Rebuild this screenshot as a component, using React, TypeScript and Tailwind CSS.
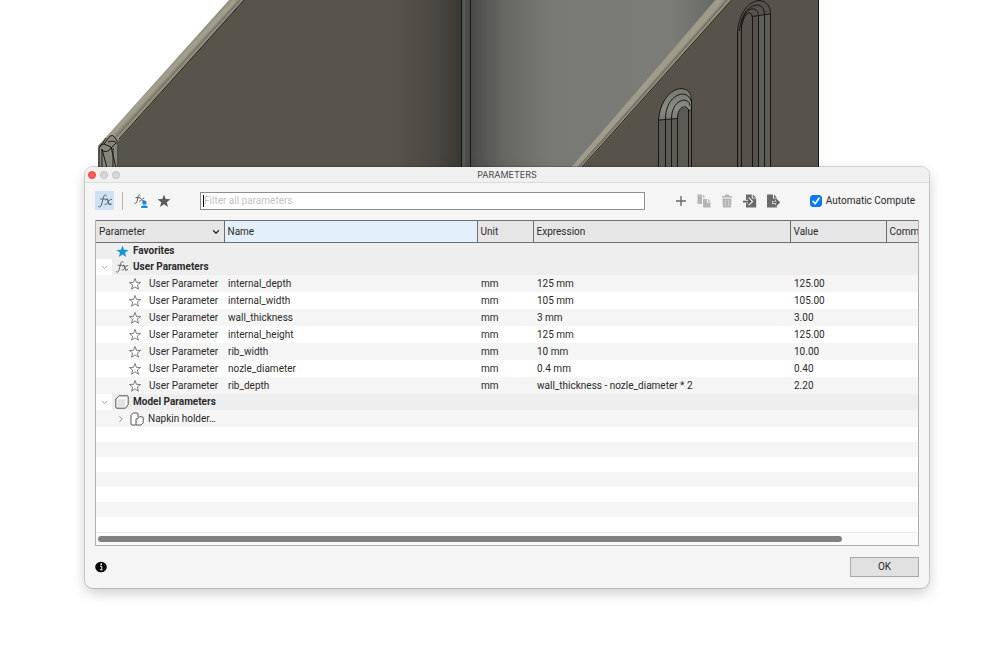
import React, { useState } from 'react'
import { ChevronDown, ChevronRight } from 'lucide-react'

const userParameters = [
  { name: 'internal_depth', unit: 'mm', expression: '125 mm', value: '125.00' },
  { name: 'internal_width', unit: 'mm', expression: '105 mm', value: '105.00' },
  { name: 'wall_thickness', unit: 'mm', expression: '3 mm', value: '3.00' },
  { name: 'internal_height', unit: 'mm', expression: '125 mm', value: '125.00' },
  { name: 'rib_width', unit: 'mm', expression: '10 mm', value: '10.00' },
  { name: 'nozle_diameter', unit: 'mm', expression: '0.4 mm', value: '0.40' },
  { name: 'rib_depth', unit: 'mm', expression: 'wall_thickness - nozle_diameter * 2', value: '2.20' },
]

const emptyRows = [0, 1, 2, 3, 4, 5, 6]

const STAR = 'M8 .6 L9.9 5.8 L15.4 6 L11.1 9.4 L12.6 14.9 L8 11.8 L3.4 14.9 L4.9 9.4 L.6 6 L6.1 5.8 Z'

function Star({ className }: { className: string }) {
  return (
    <svg viewBox="0 0 16 16" className={className} aria-hidden="true">
      <path d={STAR} strokeLinejoin="round" />
    </svg>
  )
}

function Fx({ className }: { className: string }) {
  return (
    <svg viewBox="0 0 16 16" className={className} fill="none" stroke="currentColor" strokeLinecap="round" aria-hidden="true">
      <path d="M9.4 2.6 C8.6 1.4 7.2 1.8 6.6 3.8 L4.4 12 C4 13.6 2.8 14.4 1.6 13.6" />
      <path d="M3.6 6 H8" />
      <path d="M8.8 6.7 C10.4 5.4 10.8 6.8 11.2 8.4 C11.6 10.4 12 12.4 14.2 11" strokeWidth="1.3" />
      <path d="M14.6 6.4 C13 5.8 12.2 7.6 11.2 9 C10.2 10.6 9.4 12 8 11.4" />
    </svg>
  )
}

// shaded CAD body behind the dialog
function ModelView() {
  return (
    <svg className="absolute left-0 top-0" width="1000" height="180" viewBox="0 0 1000 180" fill="none" aria-hidden="true">
      <defs>
        <linearGradient id="side" x1="118" x2="462" y1="0" y2="0" gradientUnits="userSpaceOnUse">
          <stop offset="0" stopColor="#57544c" />
          <stop offset="0.8" stopColor="#58544b" />
          <stop offset="0.92" stopColor="#4b4942" />
          <stop offset="1" stopColor="#383732" />
        </linearGradient>
        <linearGradient id="back" x1="471" x2="740" y1="0" y2="0" gradientUnits="userSpaceOnUse">
          <stop offset="0" stopColor="#4a4b49" />
          <stop offset="0.12" stopColor="#666762" />
          <stop offset="0.3" stopColor="#797a75" />
          <stop offset="0.75" stopColor="#7b7c77" />
          <stop offset="0.87" stopColor="#6d6e6b" />
          <stop offset="1" stopColor="#555654" />
        </linearGradient>
        <linearGradient id="slot" x1="0" x2="0" y1="88" y2="122" gradientUnits="userSpaceOnUse">
          <stop offset="0" stopColor="#74756f" />
          <stop offset="0.6" stopColor="#8b8c84" />
          <stop offset="1" stopColor="#74756f" />
        </linearGradient>
      </defs>

      <path d="M244 0 H462 V180 H118 V139 Z" fill="url(#side)" />
      <path d="M229 0 H244 L119 140 L108 150 L98 146 Z" fill="#95917f" />
      <path d="M235 0 L108 138" stroke="#a19e8d" strokeWidth="4" />
      <path d="M240 0 L114 139" stroke="#7c796d" strokeWidth="2" />
      <path d="M244 0 L119 139" stroke="#1c1b18" />

      <path d="M471 0 H716 L572 168 V180 H471 Z" fill="url(#back)" />
      <path d="M461 0 H471 V180 H461 Z" fill="#4a4b48" />
      <path d="M464 0 V180" stroke="#585955" strokeWidth="3" />
      <path d="M461.5 0 V180 M470.5 0 V180" stroke="#171715" />

      <path d="M731 0 H819 V180 H570 Z" fill="#57534b" />
      <path d="M715 0 H732 L582 168 H571 Z" fill="#96927f" />
      <path d="M720 0 L574 168" stroke="#a09c8b" strokeWidth="5" />
      <path d="M727 0 L578 168" stroke="#78756a" strokeWidth="2" />
      <path d="M731.5 0 L582 167" stroke="#1c1b18" />
      <path d="M818.5 0 V180" stroke="#171715" />

      <path d="M98 148 Q98 143 103 143 L112 135 L119 141 V168 H98 Z" fill="#86867a" />
      <g stroke="#1c1b18">
        <path d="M99 168 V148 Q100 144 104 144 L110 136 Q113 134 115 138 L118 142 V168" />
        <path d="M101 150 Q107 154 111 148 L117 142 M102 168 V149 L107 168 M104 144 L111 147 L116 168 M108 142 Q114 140 117 143 M100 147 L106 138 M113 148 V168" />
      </g>

      <path d="M659 180 V120 C660 102 670 88 682 88 Q692 89 692 101 V180 Z" fill="#5b5a53" />
      <path d="M659 120 C660 102 670 88 682 88 Q692 89 692 101 L690 110 Q679 102 677 119 Z" fill="url(#slot)" />
      <g stroke="#171715">
        <path d="M658.5 180 V120 C660 102 670 88.5 682 88.5 Q691.5 89 691.5 101 V180" />
        <path d="M665.5 180 V118 C666 103 674 94 684 94 Q690 96 691 101" />
        <path d="M671.5 180 V118 C672 107 677 101 684 100 Q690 101 690 106" />
        <path d="M677.5 180 V118 C678 109 682 106 686 107 L690 111 M688.5 109 V180 M659 120 L677 118.5" />
      </g>

      <path d="M738 180 V32 C739 14 748 1 760 1 Q770 2 770 14 V180 Z" fill="#54524b" />
      <path d="M758 15 L770 14 V180 H758 Z" fill="#5f5e57" />
      <g stroke="#171715">
        <path d="M737.5 180 V32 C739 14 748 .5 760 .5 Q770.5 2 770.5 14 V180" />
        <path d="M739.5 31 C741 15 748 5 758 5 Q764.5 6 764.5 15 V180" />
        <path d="M741.5 180 V26 C743 14 748 8 754 9 Q758.5 10 758.5 16 V180" />
        <path d="M741.5 26 C744 15 748 12 750 13 Q752.5 14 752.5 18 V180 M752 16.5 L770 14" />
      </g>
    </svg>
  )
}

function ToolButton({ label, children }: { label: string; children: React.ReactNode }) {
  return (
    <button aria-label={label} className="flex h-4 w-4 items-center justify-center">
      {children}
    </button>
  )
}

function Toolbar() {
  const [filter, setFilter] = useState('')
  const [auto, setAuto] = useState(true)

  return (
    <div className="flex items-center pt-2 pr-1 pb-[10px]">
      <button aria-label="All parameters" className="flex h-[19px] w-[19px] items-center justify-center bg-[#cfe2f5] text-[#5c646c]">
        <Fx className="h-4 w-4" />
      </button>
      <span className="mx-2 h-[18px] w-px bg-[#b4b4b4]" />
      <button aria-label="User parameters" className="ml-0.5 flex h-4 w-4 items-center justify-center">
        <svg viewBox="0 0 16 16" className="h-4 w-4" fill="none" stroke="#606060" strokeLinecap="round" aria-hidden="true">
          <path d="M7.2 2.4 C6.6 1.6 5.6 1.8 5.2 3.4 L4 8.4 C3.6 10 2.8 10.6 1.8 10.2 M3 4.6 H6.8" />
          <path d="M7 5.2 C8.6 4.4 8.4 9 10.8 8 M10.8 5 C9 5 8.4 8.6 6.6 8.4" />
          <circle cx="11.4" cy="9.6" r="2.2" fill="#1687d9" stroke="none" />
          <path d="M8.2 15 V13.8 Q8.4 12.6 10 12.4 H12.8 Q14.4 12.6 14.6 13.8 V15 Z" fill="#1687d9" stroke="none" />
        </svg>
      </button>
      <button aria-label="Favorites" className="ml-[7px] flex h-4 w-4 items-center justify-center">
        <Star className="h-[14px] w-[14px] fill-[#5a5a5a]" />
      </button>
      <div className="relative ml-7 flex min-w-0 flex-1">
        <input
          type="text"
          aria-label="Filter all parameters"
          placeholder="Filter all parameters"
          value={filter}
          onChange={e => setFilter(e.target.value)}
          className="h-[18px] w-full border border-[#8e8e8e] bg-white px-[3px] text-[10px] leading-4 outline-none placeholder:text-[#c3c3c3]"
        />
        {filter === '' && <span className="pointer-events-none absolute top-[3px] left-[3px] h-3 w-px bg-black" />}
      </div>
      <div className="ml-7 flex items-center gap-[7px]">
        <ToolButton label="Add parameter">
          <svg viewBox="0 0 16 16" className="h-4 w-4" stroke="#6a6a6a" strokeWidth="1.4" aria-hidden="true">
            <path d="M8 3 V13 M3 8 H13" />
          </svg>
        </ToolButton>
        <ToolButton label="Duplicate">
          <svg viewBox="0 0 16 16" className="h-4 w-4" fill="#b5b5b5" aria-hidden="true">
            <path d="M1.5 1.5 H6 V4.5 H9 V5 H6 V11 H1.5 Z M7 1.5 L9.2 3.8 H7 Z" />
            <path d="M7 6 H11 V9.5 H14.5 V14.5 H7 Z M12 5.8 L14.6 8.5 H12 Z" />
          </svg>
        </ToolButton>
        <ToolButton label="Delete">
          <svg viewBox="0 0 16 16" className="h-4 w-4" fill="#b5b5b5" aria-hidden="true">
            <path d="M3.4 5.5 H12.6 L12 14.5 H4 Z M3 3 H6 V1.6 H10 V3 H13 V4.6 H3 Z" />
            <path d="M6.4 7 V13 M9.6 7 V13" stroke="#d2d2d2" />
          </svg>
        </ToolButton>
        <ToolButton label="Import">
          <svg viewBox="0 0 16 16" className="h-4 w-4" aria-hidden="true">
            <path d="M4 1.5 H9.8 V5.6 H14.2 V14.5 H4 Z M10.8 1.5 L14.2 4.7 H10.8 Z" fill="#6b6b6b" />
            <path d="M1 8.6 H8 M6 5.4 L9.2 8.6 L6 11.8" fill="none" stroke="#f5f5f5" strokeWidth="3" />
            <path d="M1 8.6 H8 M5.4 5.4 L8.6 8.6 L5.4 11.8" fill="none" stroke="#5f5f5f" strokeWidth="1.6" />
          </svg>
        </ToolButton>
        <ToolButton label="Export">
          <svg viewBox="0 0 16 16" className="h-4 w-4" aria-hidden="true">
            <path d="M2 1.5 H8 V5.6 H12 V14.5 H2 Z M9 1.5 L12 4.7 H9 Z" fill="#6b6b6b" />
            <path d="M7 9.4 H13 M11 6.4 L14 9.4 L11 12.4" fill="none" stroke="#f5f5f5" strokeWidth="3" />
            <path d="M7.6 9.4 H14 M11 6.4 L14 9.4 L11 12.4" fill="none" stroke="#5f5f5f" strokeWidth="1.6" />
          </svg>
        </ToolButton>
      </div>
      <label className="ml-[29px] flex items-center gap-1 leading-4">
        <span className="relative flex h-3 w-3">
          <input
            type="checkbox"
            checked={auto}
            onChange={e => setAuto(e.target.checked)}
            className="peer h-3 w-3 appearance-none rounded-[3px] border border-[#b0b0b0] bg-white checked:border-[#0a74f0] checked:bg-[#0a7aff]"
          />
          <svg viewBox="0 0 12 12" className="pointer-events-none absolute inset-0 hidden peer-checked:block" fill="none" stroke="#fff" strokeWidth="1.6" strokeLinecap="round" strokeLinejoin="round" aria-hidden="true">
            <path d="M3 6.4 L5.2 8.8 L9 3.2" />
          </svg>
        </span>
        Automatic Compute
      </label>
    </div>
  )
}

function ParameterTable() {
  return (
    <table className="w-[900px] table-fixed border-collapse text-left">
      <colgroup>
        <col className="w-[128px]" />
        <col className="w-[253px]" />
        <col className="w-[56px]" />
        <col className="w-[257px]" />
        <col className="w-[96px]" />
        <col />
      </colgroup>
      <thead>
        <tr className="h-[22px] border-y border-[#6e6e6e] bg-[#e6e6e6] [&>th]:border-r [&>th]:border-[#6e6e6e] [&>th]:px-[3px] [&>th]:py-0 [&>th]:font-normal">
          <th>
            <div className="flex items-center justify-between">
              Parameter
              <ChevronDown className="h-[10px] w-[10px]" strokeWidth={3} />
            </div>
          </th>
          <th className="bg-[#e3effb]">Name</th>
          <th>Unit</th>
          <th>Expression</th>
          <th>Value</th>
          <th>Comments</th>
        </tr>
      </thead>
      <tbody className="[&_td]:overflow-hidden [&_td]:px-1 [&_td]:py-0 [&_td]:whitespace-nowrap">
        <tr className="h-4 bg-[#eeeeee]">
          <td colSpan={6}>
            <div className="flex items-center gap-1 pl-4 font-bold">
              <Star className="h-[13px] w-[13px] fill-[#1795d8]" />
              Favorites
            </div>
          </td>
        </tr>
        <tr className="h-4 bg-[#eeeeee]">
          <td colSpan={6} className="pl-0!">
            <div className="flex items-center font-bold">
              <span className="flex h-4 w-4 items-center justify-center bg-white">
                <ChevronDown className="h-[9px] w-[9px] text-[#8a8a8a]" />
              </span>
              <Fx className="mr-1 ml-[3px] h-[14px] w-[14px] text-[#5a5a5a]" />
              User Parameters
            </div>
          </td>
        </tr>
        {userParameters.map(p => (
          <tr key={p.name} className="h-[17px] odd:bg-[#f5f5f5]">
            <td className="pr-0!">
              <div className="flex items-center gap-2 pl-[29px]">
                <Star className="h-3 w-3 shrink-0 fill-white stroke-[#555]" />
                User Parameter
              </div>
            </td>
            <td>{p.name}</td>
            <td>{p.unit}</td>
            <td>{p.expression}</td>
            <td>{p.value}</td>
            <td></td>
          </tr>
        ))}
        <tr className="h-4 bg-[#eeeeee]">
          <td colSpan={6} className="pl-0!">
            <div className="flex items-center font-bold">
              <span className="flex h-4 w-4 items-center justify-center bg-white">
                <ChevronDown className="h-[9px] w-[9px] text-[#8a8a8a]" />
              </span>
              <svg viewBox="0 0 14 14" className="mr-1 ml-[3px] h-[14px] w-[14px]" fill="none" stroke="#555" strokeLinejoin="round" aria-hidden="true">
                <path d="M4 .8 H12 Q13.2 .8 13.2 2 V9.6 L10.4 13.2 H2 Q.8 13.2 .8 12 V4 Z" fill="#f8f8f8" />
                <path d="M2.4 4.4 H10 V11.6 H2.4 Z" fill="#e2e2e2" stroke="none" />
              </svg>
              Model Parameters
            </div>
          </td>
        </tr>
        <tr className="h-[17px] bg-[#f5f5f5]">
          <td className="pr-0!">
            <div className="flex items-center pl-4">
              <ChevronRight className="h-[10px] w-[10px] text-[#777]" />
              <svg viewBox="0 0 14 14" className="mr-1 ml-1 h-[14px] w-[14px]" fill="#fff" stroke="#555" strokeLinejoin="round" aria-hidden="true">
                <path d="M5.6 13 H2 Q1 13 1 12 V3.4 L3.2 1 H7 Q8 1 8 2 V5" />
                <path d="M6 7 H7.4 L9.4 4.8 H12.2 Q13.2 4.8 13.2 5.8 V10.8 L11 13 H6 Z" />
              </svg>
              Napkin holder…
            </div>
          </td>
          <td colSpan={5}></td>
        </tr>
        {emptyRows.map(i => (
          <tr key={i} className="h-[15px] odd:bg-[#f5f5f5]">
            <td colSpan={6}></td>
          </tr>
        ))}
      </tbody>
    </table>
  )
}

export default function App() {
  return (
    <div className="relative min-h-screen overflow-hidden bg-white pt-[167px] pr-[71px] pl-[85px] font-[Roboto,sans-serif] text-[10px] leading-4 text-[#2a2a2a]">
      <ModelView />
      <section role="dialog" aria-label="Parameters" className="relative rounded-lg bg-[#f5f5f5] shadow-[0_0_0_1px_rgba(0,0,0,0.15),0_5px_14px_rgba(0,0,0,0.2)]">
        <header className="grid h-4 grid-cols-[1fr_auto_1fr] items-center rounded-t-lg border-b border-[#dcdcdc] bg-[#f0f0f0] px-[3px]">
          <div className="flex gap-1">
            <button aria-label="Close" className="h-2 w-2 rounded-full border border-[#e0443e] bg-[#fc5b57]" />
            <button aria-label="Minimize" className="h-2 w-2 rounded-full border border-[#c2c2c2] bg-[#d8d8d8]" />
            <button aria-label="Zoom" className="h-2 w-2 rounded-full border border-[#c2c2c2] bg-[#d8d8d8]" />
          </div>
          <h1 className="font-[Inter,sans-serif] text-[9px] text-[#4a4a4a]">PARAMETERS</h1>
        </header>
        <div className="px-[10px]">
          <Toolbar />
          <div className="overflow-hidden border border-t-0 border-[#b0b0b0] bg-white">
            <ParameterTable />
            <div className="border-t border-[#ececec] bg-[#fafafa] px-0.5 py-[3px]">
              <div className="h-1.5 w-[91%] rounded-full bg-[#808080]" />
            </div>
          </div>
          <footer className="flex items-center justify-between py-[11px]">
            <button aria-label="Info" className="flex h-4 w-4 items-center">
              <svg viewBox="0 0 12 12" className="h-3 w-3" aria-hidden="true">
                <ellipse cx="6" cy="6" rx="5.8" ry="5.2" fill="#000" />
                <path d="M5 5.2 H6.8 V8.6 M4.8 8.8 H7.6" stroke="#fff" fill="none" />
                <circle cx="6.2" cy="3.2" r="0.9" fill="#fff" />
              </svg>
            </button>
            <button className="h-5 w-[69px] border border-[#a9a9a9] bg-[#e1e1e1]">OK</button>
          </footer>
        </div>
      </section>
    </div>
  )
}
